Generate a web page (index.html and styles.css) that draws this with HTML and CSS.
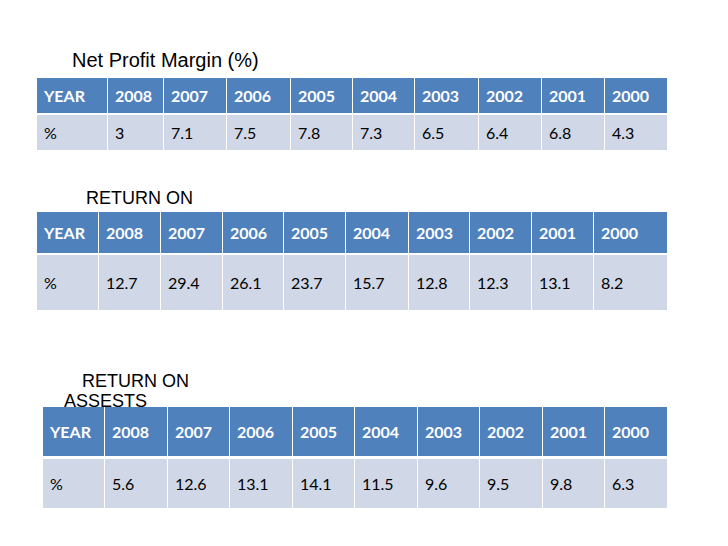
FILE: index.html
```html
<!DOCTYPE html>
<html>
<head>
<meta charset="utf-8">
<link rel="stylesheet" href="styles.css">
</head>
<body>
<div class="slide">
  <div class="title title-npm">Net Profit Margin (%)</div>
  <div class="grid grid-npm">
    <div class="h">YEAR</div><div class="h">2008</div><div class="h">2007</div><div class="h">2006</div><div class="h">2005</div><div class="h">2004</div><div class="h">2003</div><div class="h">2002</div><div class="h">2001</div><div class="h">2000</div>
    <div class="d">%</div><div class="d">3</div><div class="d">7.1</div><div class="d">7.5</div><div class="d">7.8</div><div class="d">7.3</div><div class="d">6.5</div><div class="d">6.4</div><div class="d">6.8</div><div class="d">4.3</div>
  </div>

  <div class="title title-roe">RETURN ON</div>
  <div class="grid grid-roe">
    <div class="h">YEAR</div><div class="h">2008</div><div class="h">2007</div><div class="h">2006</div><div class="h">2005</div><div class="h">2004</div><div class="h">2003</div><div class="h">2002</div><div class="h">2001</div><div class="h">2000</div>
    <div class="d">%</div><div class="d">12.7</div><div class="d">29.4</div><div class="d">26.1</div><div class="d">23.7</div><div class="d">15.7</div><div class="d">12.8</div><div class="d">12.3</div><div class="d">13.1</div><div class="d">8.2</div>
  </div>

  <div class="title title-roa">RETURN ON ASSESTS</div>
  <div class="grid grid-roa">
    <div class="h">YEAR</div><div class="h">2008</div><div class="h">2007</div><div class="h">2006</div><div class="h">2005</div><div class="h">2004</div><div class="h">2003</div><div class="h">2002</div><div class="h">2001</div><div class="h">2000</div>
    <div class="d">%</div><div class="d">5.6</div><div class="d">12.6</div><div class="d">13.1</div><div class="d">14.1</div><div class="d">11.5</div><div class="d">9.6</div><div class="d">9.5</div><div class="d">9.8</div><div class="d">6.3</div>
  </div>
</div>
</body>
</html>
```

FILE: styles.css
```css
html, body {
  margin: 0;
  padding: 0;
  background: #ffffff;
}

.slide {
  width: 728px;
  height: 546px;
  padding-top: 50px;
  box-sizing: border-box;
  overflow: hidden;
}

.title {
  font-family: "Liberation Sans", Arial, sans-serif;
  color: #000000;
  line-height: 20px;
  white-space: nowrap;
}

.title-npm {
  font-size: 20px;
  height: 28px;
  margin-left: 72px;
}

.title-roe {
  font-size: 18px;
  height: 24px;
  margin-top: 38px;
  margin-left: 86px;
}

.title-roa {
  font-size: 18px;
  height: 36px;
  margin-top: 61px;
  margin-left: 64px;
  width: 130px;
  white-space: normal;
  text-indent: 18px;
  overflow: hidden;
}

.grid {
  display: grid;
  column-gap: 1px;
  font-family: Lato, "Open Sans", sans-serif;
  font-size: 16px;
}

.grid-npm {
  margin-left: 37px;
  grid-template-columns: 70px 55px 62px 63px 61px 61px 63px 62px 62px 62px;
  grid-template-rows: 35px 35px;
  row-gap: 2px;
}

.grid-roe {
  margin-left: 37px;
  grid-template-columns: 61px 61px 61px 60px 61px 62px 60px 61px 61px 73px;
  grid-template-rows: 41px 55px;
  row-gap: 2px;
}

.grid-roa {
  margin-left: 43px;
  grid-template-columns: 61px 62px 61px 62px 61px 62px 61px 62px 61px 62px;
  grid-template-rows: 49px 49px;
  row-gap: 3px;
}

.h, .d {
  display: flex;
  align-items: center;
  padding-left: 7px;
}

.h {
  background: #4f81bd;
  color: #ffffff;
  font-weight: 700;
}

.d {
  background: #d0d8e8;
  color: #000000;
}
```
